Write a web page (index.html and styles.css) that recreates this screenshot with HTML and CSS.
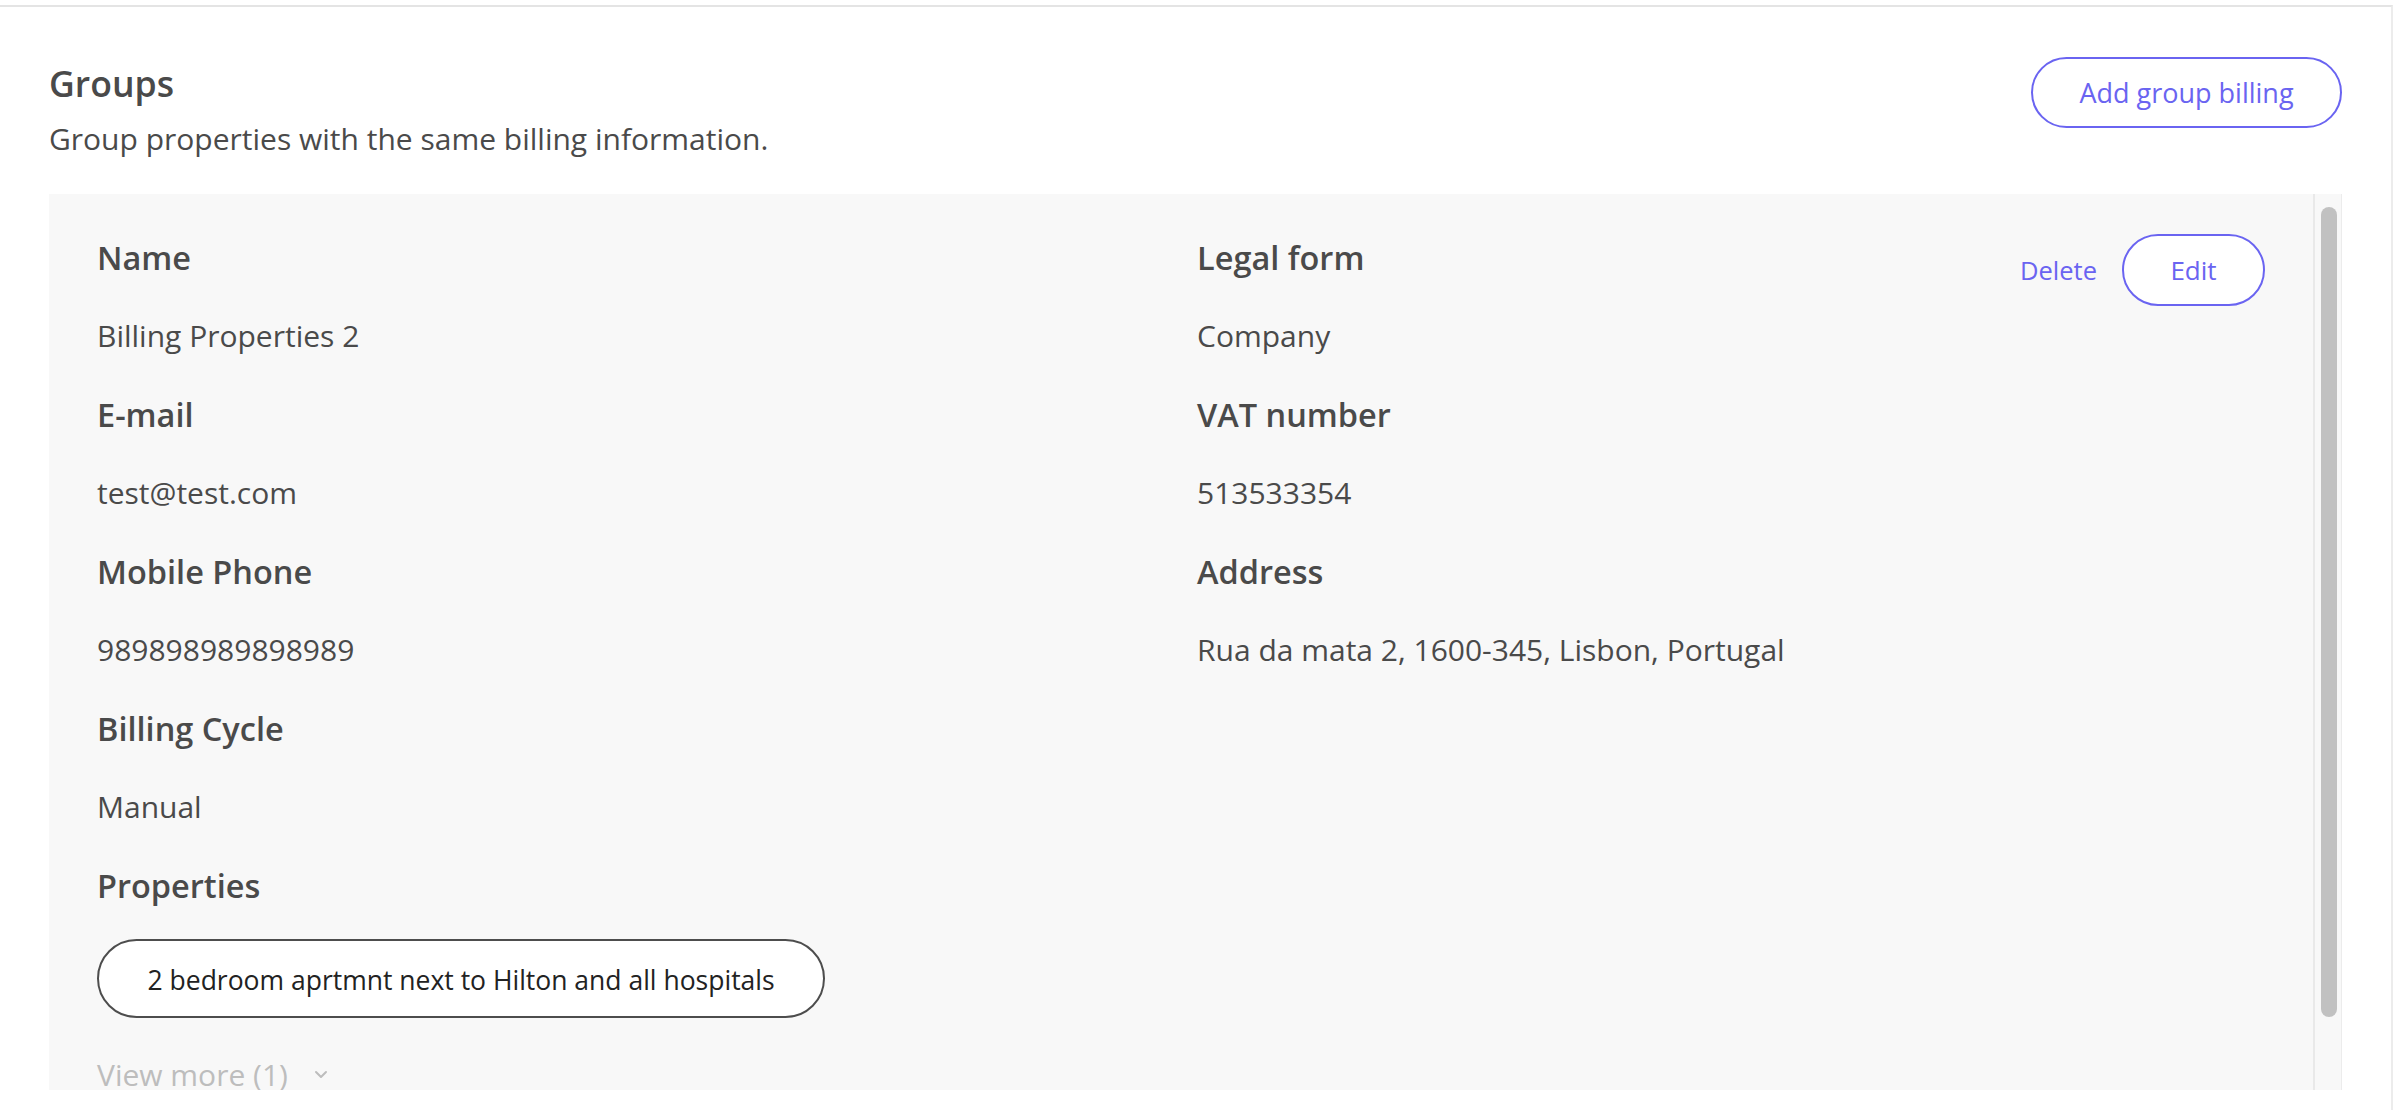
FILE: index.html
```html
<!DOCTYPE html>
<html lang="en">
<head>
<meta charset="utf-8">
<title>Groups</title>
<link rel="stylesheet" href="styles.css">
</head>
<body>
<div class="frame">
  <section class="groups">
    <header class="groups-head">
      <div class="head-text">
        <h2 class="title">Groups</h2>
        <p class="subtitle">Group properties with the same billing information.</p>
      </div>
      <button class="btn-outline btn-add" type="button">Add group billing</button>
    </header>

    <div class="card">
      <div class="card-body">
        <div class="card-grid">
          <div class="col">
            <div class="field"><div class="label">Name</div><div class="value">Billing Properties 2</div></div>
            <div class="field"><div class="label">E-mail</div><div class="value">test@test.com</div></div>
            <div class="field"><div class="label">Mobile Phone</div><div class="value">989898989898989</div></div>
            <div class="field"><div class="label">Billing Cycle</div><div class="value">Manual</div></div>
            <div class="field field-props">
              <div class="label">Properties</div>
              <div class="chips"><span class="chip">2 bedroom aprtmnt next to Hilton and all hospitals</span></div>
              <button class="view-more" type="button">View more (1)
                <svg class="chev" width="14" height="9" viewBox="0 0 14 9" aria-hidden="true"><polyline points="2,2 7,7 12,2" fill="none" stroke="#bdbdbd" stroke-width="2" stroke-linecap="round" stroke-linejoin="round"/></svg>
              </button>
            </div>
          </div>
          <div class="col">
            <div class="field"><div class="label">Legal form</div><div class="value">Company</div></div>
            <div class="field"><div class="label">VAT number</div><div class="value">513533354</div></div>
            <div class="field"><div class="label">Address</div><div class="value">Rua da mata 2, 1600-345, Lisbon, Portugal</div></div>
          </div>
          <div class="actions">
            <button class="link-btn" type="button">Delete</button>
            <button class="btn-outline btn-edit" type="button">Edit</button>
          </div>
        </div>
      </div>
      <div class="rail" aria-hidden="true"><div class="thumb"></div></div>
    </div>
  </section>
</div>
</body>
</html>
```

FILE: styles.css
```css
* { box-sizing: border-box; }
html, body { margin: 0; padding: 0; background: #ffffff; }
body {
  font-family: "Open Sans", "Noto Sans", "Liberation Sans", sans-serif;
  color: #4a4a4a;
  overflow: hidden;
}
button { font-family: inherit; cursor: pointer; }

.frame {
  margin-top: 5px;
  width: 2393px;
  height: 1105px;
  border-top: 2px solid #e4e4e4;
  border-right: 2px solid #ececec;
  padding: 0 49px 0 49px;
}

.groups-head {
  display: flex;
  justify-content: space-between;
  align-items: flex-start;
  padding-top: 50px;
}
.head-text { padding-top: 4px; }
.title {
  margin: 0;
  font-size: 35.6px;
  line-height: 44px;
  font-weight: 600;
  color: #4a4a4a;
}
.subtitle {
  margin: 15.5px 0 0;
  font-size: 30px;
  line-height: 36px;
  font-weight: 400;
  color: #4a4a4a;
}

.btn-outline {
  background: #ffffff;
  border: 2px solid #6a64f1;
  color: #6a64f1;
  border-radius: 40px;
  font-size: 26px;
  font-weight: 400;
  display: inline-flex;
  align-items: center;
  justify-content: center;
  padding: 0;
}
.btn-add { width: 311px; height: 71px; font-size: 27px; }
.btn-edit { width: 143px; height: 72px; }

.card {
  margin-top: 37.1px;
  height: 896px;
  background: #f8f8f8;
  display: flex;
}
.card-body {
  flex: 1;
  min-width: 0;
  overflow: hidden;
  padding: 44.4px 48px 0 48px;
}
.rail {
  width: 29px;
  flex: none;
  border-left: 2px solid #e9e9e9;
  border-right: 1px solid #ececec;
  background: #f8f8f8;
  padding: 13px 4px 0 6px;
}
.thumb {
  width: 16px;
  height: 810px;
  border-radius: 8px;
  background: #c1c1c1;
}

.card-grid {
  display: grid;
  grid-template-columns: 1100px 1fr auto;
}
.col { display: flex; flex-direction: column; gap: 41.3px; }
.field { display: flex; flex-direction: column; gap: 39.7px; align-items: flex-start; }
.label {
  font-size: 32.5px;
  line-height: 40px;
  font-weight: 600;
  color: #4a4a4a;
}
.value {
  font-size: 30px;
  line-height: 36px;
  font-weight: 400;
  color: #4a4a4a;
}
.field-props { gap: 0; }
.chips { margin-top: 32.6px; display: flex; gap: 16px; }
.chip {
  display: inline-flex;
  align-items: center;
  height: 79px;
  padding: 3px 48.5px 0;
  border: 2px solid #4d4d4d;
  border-radius: 40px;
  background: #ffffff;
  font-size: 26.5px;
  color: #222222;
}
.view-more {
  margin-top: 39.4px;
  padding: 0;
  border: 0;
  background: transparent;
  font-size: 30px;
  line-height: 36px;
  color: #bdbdbd;
  display: inline-flex;
  align-items: center;
  gap: 26px;
}
.chev { margin-top: 0; }

.actions {
  display: flex;
  align-items: center;
  gap: 25px;
  margin-top: -4.4px;
  align-self: start;
}
.link-btn {
  border: 0;
  background: transparent;
  padding: 0;
  color: #6a64f1;
  font-size: 25.5px;
}
```
